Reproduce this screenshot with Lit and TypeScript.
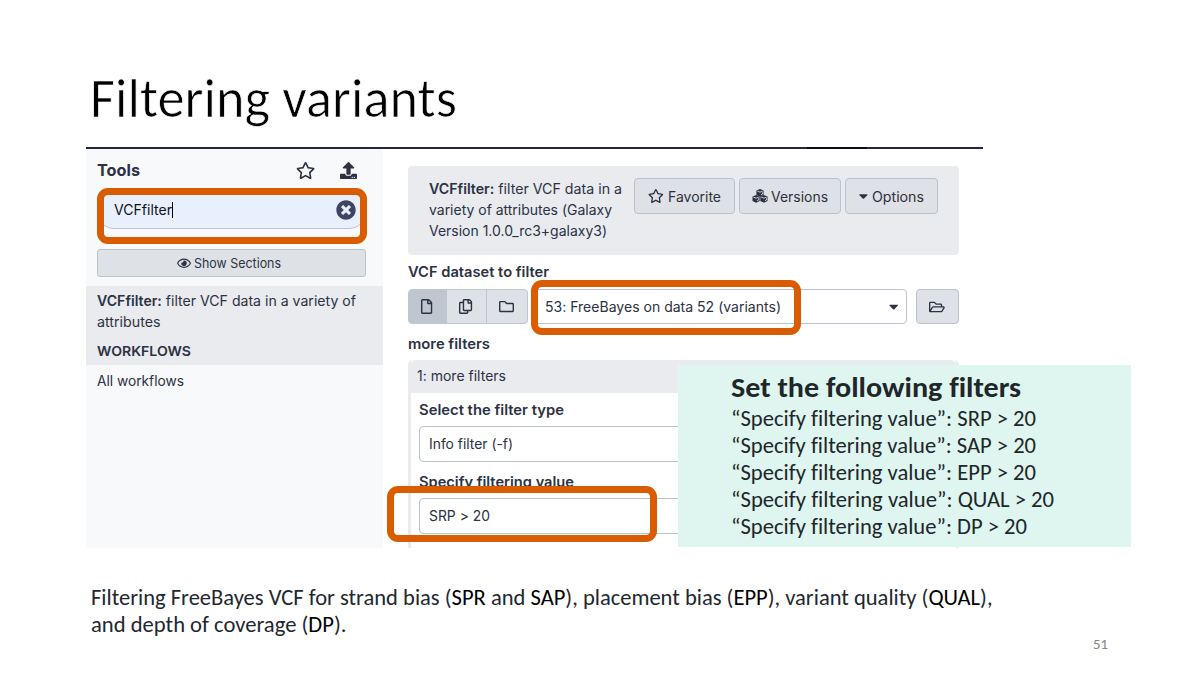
import { LitElement, html, css, svg } from "lit";
import { customElement, property, query } from "lit/decorators.js";

const ICONS: Record<string, [number, string]> = {
  star: [576, "M528.1 171.5L382 150.2 316.7 17.8c-11.7-23.6-45.6-23.9-57.4 0L194 150.2 47.9 171.5c-26.2 3.8-36.7 36.1-17.7 54.6l105.7 103-25 145.5c-4.5 26.3 23.2 46 46.4 33.7L288 439.6l130.7 68.7c23.2 12.2 50.9-7.4 46.4-33.7l-25-145.5 105.7-103c19-18.5 8.5-50.8-17.7-54.6zM388.6 312.3l23.7 138.4L288 385.4l-124.3 65.3 23.7-138.4-100.6-98 139-20.2 62.2-126 62.2 126 139 20.2-100.6 98z"],
  file: [384, "M369.9 97.9L286 14C277 5 264.8-.1 252.1-.1H48C21.5 0 0 21.5 0 48v416c0 26.5 21.5 48 48 48h288c26.5 0 48-21.5 48-48V131.9c0-12.7-5.1-25-14.1-34zM332.1 128H256V51.9l76.1 76.1zM48 464V48h160v104c0 13.3 10.7 24 24 24h104v288H48z"],
  copy: [448, "M433.941 65.941l-51.882-51.882A48 48 0 0 0 348.118 0H176c-26.51 0-48 21.49-48 48v48H48c-26.51 0-48 21.49-48 48v320c0 26.51 21.49 48 48 48h224c26.51 0 48-21.49 48-48v-48h80c26.51 0 48-21.49 48-48V99.882a48 48 0 0 0-14.059-33.941zM266 464H54a6 6 0 0 1-6-6V150a6 6 0 0 1 6-6h74v224c0 26.51 21.49 48 48 48h96v42a6 6 0 0 1-6 6zm128-96H182a6 6 0 0 1-6-6V54a6 6 0 0 1 6-6h106v88c0 13.255 10.745 24 24 24h88v202a6 6 0 0 1-6 6zm6-256h-64V48h9.632c1.591 0 3.117.632 4.243 1.757l48.368 48.368a6 6 0 0 1 1.757 4.243V112z"],
  folder: [512, "M464 128H272l-54.63-54.63c-6-6-14.14-9.37-22.63-9.37H48C21.49 64 0 85.49 0 112v288c0 26.51 21.49 48 48 48h416c26.51 0 48-21.49 48-48V176c0-26.51-21.49-48-48-48zm0 272H48V112h140.12l54.63 54.63c6 6 14.14 9.37 22.63 9.37H464v224z"],
  folderOpen: [576, "M527.9 224H480v-48c0-26.5-21.5-48-48-48H272l-64-64H48C21.5 64 0 85.5 0 112v288c0 26.5 21.5 48 48 48h400c16.5 0 31.9-8.5 40.7-22.6l79.9-128c20-31.9-3-73.4-40.7-73.4zM48 118c0-3.3 2.7-6 6-6h134.1l64 64H426c3.3 0 6 2.7 6 6v42H152c-16.8 0-32.4 8.8-41.1 23.2L48 351.4zm400 282H72l77.2-128H528z"],
  clear: [512, "M256 8C119 8 8 119 8 256s111 248 248 248 248-111 248-248S393 8 256 8zm121.6 313.1c4.7 4.7 4.7 12.3 0 17L338 377.6c-4.7 4.7-12.3 4.7-17 0L256 312l-65.1 65.6c-4.7 4.7-12.3 4.7-17 0L134.4 338c-4.7-4.7-4.7-12.3 0-17l65.6-65-65.6-65.1c-4.7-4.7-4.7-12.3 0-17l39.6-39.6c4.7-4.7 12.3-4.7 17 0l65 65.7 65.1-65.6c4.7-4.7 12.3-4.7 17 0l39.6 39.6c4.7 4.7 4.7 12.3 0 17L312 256l65.6 65.1z"],
  eye: [576, "M288 144a110.94 110.94 0 0 0-31.24 5 55.4 55.4 0 0 1 7.24 27 56 56 0 0 1-56 56 55.4 55.4 0 0 1-27-7.24A111.71 111.71 0 1 0 288 144zm284.52 97.4C518.29 135.59 410.93 64 288 64S57.68 135.64 3.48 241.41a32.35 32.35 0 0 0 0 29.19C57.71 376.41 165.07 448 288 448s230.32-71.64 284.52-177.41a32.35 32.35 0 0 0 0-29.19zM288 400c-98.65 0-189.09-55-237.93-144C98.91 167 189.34 112 288 112s189.09 55 237.93 144C477.1 345 386.66 400 288 400z"],
  upload: [512, "M296 384h-80c-13.3 0-24-10.7-24-24V192h-87.7c-17.8 0-26.7-21.5-14.1-34.1L242.3 5.7c7.5-7.5 19.8-7.5 27.3 0l152.2 152.2c12.6 12.6 3.7 34.1-14.1 34.1H320v168c0 13.3-10.7 24-24 24zm216-8v112c0 13.3-10.7 24-24 24H24c-13.3 0-24-10.7-24-24V376c0-13.3 10.7-24 24-24h136v8c0 30.9 25.1 56 56 56h80c30.9 0 56-25.1 56-56v-8h136c13.3 0 24 10.7 24 24zm-124 88c0-11-9-20-20-20s-20 9-20 20 9 20 20 20 20-9 20-20zm64 0c0-11-9-20-20-20s-20 9-20 20 9 20 20 20 20-9 20-20z"],
  caret: [320, "M31.3 192h257.3c17.8 0 26.7 21.5 14.1 34.1L174.1 354.8c-7.8 7.8-20.5 7.8-28.3 0L17.2 226.1C4.6 213.5 13.5 192 31.3 192z"],
};

const icon = (name: string, size: number) => {
  const [w, d] = ICONS[name];
  return html`<svg width=${(w / 512) * size} height=${size} viewBox="0 0 ${w} 512" fill="currentColor"><path d=${d}></path></svg>`;
};

const cube = (x: number, y: number) => svg`
  <g transform="translate(${x} ${y})">
    <path fill="currentColor" d="M4 0 L7.6 1.5 V5.9 L4 7.7 L.4 5.9 V1.5 Z"></path>
    <path fill="none" stroke="#dee1e6" stroke-width=".9" d="M1.3 2.1 L4 3.2 L6.7 2.1 M5 5.7 L6.6 4.9 V3.3"></path>
  </g>`;
const cubes = html`<svg width="16" height="14" viewBox="0 0 16 14">${cube(4, 0)}${cube(0.1, 6)}${cube(7.9, 6)}</svg>`;

/* A single line of text set to an exact measure. */
@customElement("fit-line")
export class FitLine extends LitElement {
  @property({ type: Number }) w = 0;
  @query("span") private line!: HTMLSpanElement;
  static styles = css`
    :host { display: block; white-space: nowrap; flex: none; }
    span { display: inline-block; transform-origin: 0 50%; vertical-align: top; }
  `;
  updated() {
    this.style.width = `${this.w}px`;
    const natural = this.line.offsetWidth && this.line.getBoundingClientRect().width;
    if (natural) this.line.style.transform = `scaleX(${this.w / natural})`;
  }
  render() {
    return html`<span><slot></slot></span>`;
  }
}

@customElement("app-root")
export class AppRoot extends LitElement {
  static styles = css`
    :host { display: block; width: 1200px; height: 675px; overflow: hidden; background: #fff; }
    * { box-sizing: border-box; }
    svg { display: block; flex: none; }
    .slide { width: 1200px; height: 675px; padding: 60px 69px 0 86px; display: flex; flex-direction: column; position: relative; font-variant-ligatures: none; }
    .title { margin: 0; height: 87px; padding: 3px 0 0 4px; font: 400 55px/72px Carlito, "Open Sans", sans-serif; font-variant-ligatures: none; color: #000; -webkit-text-stroke: .7px #fff; }
    .rule { height: 2px; width: 897px; background: linear-gradient(90deg, #25273f 0 721px, #0b0c1a 721px 781px, #25273f 781px); }
    .shot { height: 399px; display: flex; position: relative; font-family: Inter, sans-serif; font-size: 14px; line-height: 21px; color: #2c3143; overflow: hidden; }
    .side { width: 296.5px; background: #f8f9fb; flex: none; }
    .head { height: 43px; padding: 0 0 0 10.5px; display: flex; align-items: center; font-weight: 700; font-size: 16.5px; }
    .head .st { margin-left: 156.5px; }
    .head .up { margin-left: 24.5px; }
    .search { margin: 0 0 0 10.5px; width: 269px; height: 37px; border: 1px solid #b9c3cf; border-radius: 17px; background: #e8f0fe; display: flex; align-items: center; color: #111; padding: 0 0 2px 16.5px; }
    .caret { width: 1px; height: 16px; background: #000; margin-right: 163px; }
    .search svg { color: #3f4560; }
    .sections { margin: 20px 0 0 10.5px; width: 269.5px; height: 28px; border: 1px solid #b9c3cf; border-radius: 3px; background: #dee1e6; display: flex; align-items: center; gap: 3.5px; padding-left: 79px; font-size: 13px; }
    .result { margin-top: 9px; height: 79px; background: #e9ebef; padding: 4px 0 0 10.5px; }
    .flows { margin-top: 9px; font-weight: 600; font-size: 13.5px; }
    .all { padding: 5px 0 0 10.5px; }
    b { font-weight: 600; }
    .main { width: 551px; margin-left: 25.5px; flex: none; }
    .tool { margin-top: 17px; height: 89px; border-radius: 4px; background: #e9ebef; display: flex; padding: 12px 0 0 21px; }
    .buttons { display: flex; gap: 4px; margin-left: 12px; }
    .btn { height: 36px; border: 1px solid #b9c3cf; border-radius: 4px; background: #dee1e6; display: flex; align-items: center; }
    .fav { width: 101px; padding-left: 13px; gap: 4px; }
    .ver { width: 102px; padding-left: 12px; gap: 3px; }
    .opt { width: 93px; padding-left: 13px; gap: 4px; }
    .label { font-weight: 600; height: 34px; padding-top: 6px; }
    .more { height: 36px; padding-top: 9px; }
    .row { display: flex; height: 35px; }
    .group { width: 120px; display: flex; border: 1px solid #bdc6d1; border-radius: 4px; overflow: hidden; background: #dee1e6; }
    .seg { display: flex; align-items: center; justify-content: center; width: 40px; border-left: 1px solid #bdc6d1; padding-right: 1px; }
    .seg.on { background: #bec6d0; width: 37px; border-left: 0; }
    .seg.last { width: 41px; padding-right: 2px; }
    .select { margin-left: 4px; width: 375px; border: 1px solid #bdc3d0; border-radius: 4px; display: flex; align-items: center; padding-left: 12px; }
    .select svg { margin-left: 108px; }
    .open { width: 43px; height: 35px; margin-left: 9px; justify-content: center; padding-right: 1px; }
    .repeat { height: 250px; border: 3px solid #e9ebef; border-top: 0; border-radius: 5px 5px 0 0; }
    .cap { height: 33px; background: #e9ebef; padding: 5px 0 0 6px; border-radius: 5px 5px 0 0; }
    .body { padding: 6px 0 0 8px; }
    .body .lab { font-weight: 600; height: 27px; }
    .field { height: 36px; width: 520px; border: 1px solid #b9c3cf; border-radius: 4px; padding: 6px 0 0 9px; }
    .field + .lab { margin-top: 9px; }
    .help { margin-top: 9.5px; font-size: 13px; color: #8b8f9b; }
    .ring { position: absolute; border: 7px solid #d95d00; border-radius: 11px; }
    .r1 { left: 97px; top: 188px; width: 270px; height: 56px; }
    .r2 { left: 531px; top: 280px; width: 270px; height: 55px; }
    .r3 { left: 387px; top: 486px; width: 270px; height: 56px; }
    .note { position: absolute; left: 678px; top: 365px; width: 453px; height: 182px; background: #dff5ef; padding: 6px 0 0 53px; font-family: Carlito, "Open Sans", sans-serif; font-size: 22.2px; line-height: 27px; color: #20262a; }
    .note .h { font-weight: 700; font-size: 28.5px; line-height: 34px; }
    .copy { margin-top: 36px; padding-left: 5px; font-family: Carlito, "Open Sans", sans-serif; font-size: 22.2px; line-height: 27px; color: #23272f; }
    .copy i { font-style: normal; color: #000; }
    .num { margin: -3px 0 0 1007px; font-family: Carlito, "Open Sans", sans-serif; font-size: 15px; line-height: 18px; color: #858585; }
  `;

  private filters: [string, number][] = [["SRP", 305], ["SAP", 305], ["EPP", 305], ["QUAL", 323], ["DP", 296]];

  render() {
    return html`<div class="slide">
      <h1 class="title"><fit-line w="367">Filtering variants</fit-line></h1>
      <div class="rule"></div>
      <div class="shot">
        <div class="side">
          <div class="head"><fit-line w="43">Tools</fit-line><span class="st">${icon("star", 17)}</span><span class="up">${icon("upload", 17)}</span></div>
          <div class="search"><fit-line w="58">VCFfilter</fit-line><span class="caret"></span>${icon("clear", 20)}</div>
          <div class="sections">${icon("eye", 12.5)}<fit-line w="87">Show Sections</fit-line></div>
          <div class="result">
            <fit-line w="259"><b>VCFfilter:</b> filter VCF data in a variety of</fit-line>
            <fit-line w="63.5">attributes</fit-line>
            <fit-line class="flows" w="94">WORKFLOWS</fit-line>
          </div>
          <div class="all"><fit-line w="87">All workflows</fit-line></div>
        </div>
        <div class="main">
          <div class="tool">
            <div>
              <fit-line w="193"><b>VCFfilter:</b> filter VCF data in a</fit-line>
              <fit-line w="183">variety of attributes (Galaxy</fit-line>
              <fit-line w="178">Version 1.0.0_rc3+galaxy3)</fit-line>
            </div>
            <div class="buttons">
              <div class="btn fav">${icon("star", 14)}<fit-line w="53">Favorite</fit-line></div>
              <div class="btn ver">${cubes}<fit-line w="57">Versions</fit-line></div>
              <div class="btn opt">${icon("caret", 14)}<fit-line w="52">Options</fit-line></div>
            </div>
          </div>
          <div class="label"><fit-line w="141">VCF dataset to filter</fit-line></div>
          <div class="row">
            <div class="group">
              <span class="seg on">${icon("file", 15)}</span><span class="seg">${icon("copy", 15)}</span><span class="seg last">${icon("folder", 15)}</span>
            </div>
            <div class="select"><fit-line w="236">53: FreeBayes on data 52 (variants)</fit-line>${icon("caret", 15)}</div>
            <div class="btn open">${icon("folderOpen", 14)}</div>
          </div>
          <div class="label more"><fit-line w="82">more filters</fit-line></div>
          <div class="repeat">
            <div class="cap"><fit-line w="89">1: more filters</fit-line></div>
            <div class="body">
              <fit-line class="lab" w="145">Select the filter type</fit-line>
              <div class="field"><fit-line w="84">Info filter (-f)</fit-line></div>
              <fit-line class="lab" w="155">Specify filtering value</fit-line>
              <div class="field"><fit-line w="61">SRP &gt; 20</fit-line></div>
              <div class="help"><fit-line w="262">any records not fulfilling the requirements listed</fit-line></div>
            </div>
          </div>
        </div>
      </div>
      <div class="copy">
        <fit-line w="901.5">Filtering FreeBayes VCF for strand bias (<i>SPR</i> and <i>SAP</i>), placement bias (<i>EPP</i>), variant quality (<i>QUAL</i>),</fit-line>
        <fit-line w="255.5">and depth of coverage (<i>DP</i>).</fit-line>
      </div>
      <div class="num"><fit-line w="15">51</fit-line></div>
      <div class="ring r1"></div>
      <div class="ring r2"></div>
      <div class="ring r3"></div>
      <div class="note">
        <fit-line class="h" w="290">Set the following filters</fit-line>
        ${this.filters.map(([k, w]) => html`<fit-line w=${w}>“Specify filtering value”: ${k} &gt; 20</fit-line>`)}
      </div>
    </div>`;
  }
}
